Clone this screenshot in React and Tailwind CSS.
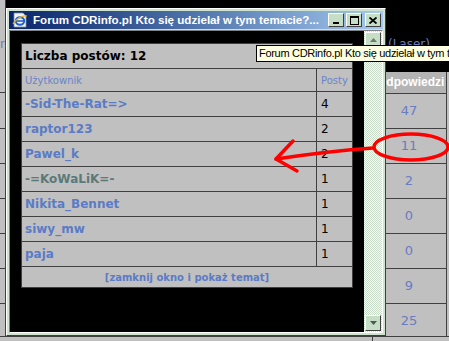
import React from "react";

const users = [
  { name: "-Sid-The-Rat=>", posts: 4 },
  { name: "raptor123", posts: 2 },
  { name: "Pawel_k", posts: 2 },
  { name: "-=KoWaLiK=-", posts: 1, visited: true },
  { name: "Nikita_Bennet", posts: 1 },
  { name: "siwy_mw", posts: 1 },
  { name: "paja", posts: 1 },
];

const replies = ["47", "11", "2", "0", "0", "9", "25"];

function IeIcon() {
  return (
    <svg width="16" height="16" viewBox="0 0 16 16">
      <path d="M2 1h9l3 3v11H2z" fill="#f4f4f4" stroke="#7a8aa0" strokeWidth="0.8" />
      <ellipse cx="8" cy="9" rx="4.2" ry="3.8" fill="none" stroke="#1f5fd0" strokeWidth="2" />
      <path d="M4 9h8" stroke="#1f5fd0" strokeWidth="1.6" />
      <path d="M1 12c3-5 9-9 14-8" fill="none" stroke="#e8b020" strokeWidth="1.2" />
    </svg>
  );
}

function TitleButton({ children }) {
  return (
    <div className="flex h-[14px] w-[16px] items-center justify-center border border-t-white border-l-white border-r-[#404040] border-b-[#404040] bg-[#c6dec6]">
      {children}
    </div>
  );
}

function ScrollButton({ up }) {
  return (
    <div className="flex h-[16px] w-[16px] items-center justify-center border border-t-white border-l-white border-r-[#404040] border-b-[#404040] bg-[#c6dec6]">
      <svg width="7" height="4" viewBox="0 0 7 4">
        {up ? <path d="M0 4h7L3.5 0z" fill="#707870" /> : <path d="M0 0h7L3.5 4z" fill="#505850" />}
      </svg>
    </div>
  );
}

export default function App() {
  return (
    <div className="relative h-[341px] w-[449px] overflow-hidden bg-black font-['DejaVu_Sans',sans-serif]">
      {/* page behind the popup */}
      <div className="flex h-full">
        <div className="flex w-[6px] flex-col border-r border-[#404040] bg-[#c0c0c0]">
          <div className="h-[93px] border-b border-[#404040] pt-[38px] text-[12px] leading-none text-[#6a7cc0]">ra</div>
          <div className="h-[36px] border-b border-[#404040]" />
          <div className="h-[35px] border-b border-[#404040]" />
          <div className="h-[35px] border-b border-[#404040]" />
          <div className="h-[35px] border-b border-[#404040]" />
          <div className="h-[35px] border-b border-[#404040]" />
          <div className="h-[35px] border-b border-[#404040]" />
        </div>
        <div className="w-[380px]" />
        <div className="flex w-[63px] flex-col">
          <div className="h-[72px] pl-[2px] pt-[38px] text-[12px] leading-none text-[#6a7cc0]">(Laser)</div>
          <div className="flex">
            <div className="w-[61px] border-r border-[#404040]">
              <div className="h-[21px] overflow-hidden whitespace-nowrap bg-[#b4b4b4] pt-[4px] font-['Liberation_Sans',sans-serif] text-[12px] font-bold leading-[13px] text-white">
                <span className="ml-[-9px]">Odpowiedzi</span>
              </div>
              {replies.map((r, i) => (
                <div
                  key={i}
                  className="flex h-[35px] items-center justify-center border-t border-[#404040] bg-[#c0c0c0] pr-[14px] text-[13px] text-[#6a7cc0]"
                >
                  {r}
                </div>
              ))}
            </div>
            <div className="w-[2px] bg-[#c0c0c0]" />
          </div>
        </div>
      </div>
      <div className="absolute bottom-0 left-0 h-[5px] w-full border-t border-[#404040] bg-[#c0c0c0]">
        <div className="ml-[372px] h-full w-px bg-[#404040]" />
      </div>

      {/* popup window */}
      <div className="absolute left-[6px] top-[8px] flex h-[328px] w-[380px] flex-col border border-t-white border-l-white border-r-[#404040] border-b-[#404040] bg-[#cfe4cf] p-[2px]">
        <div className="flex h-[18px] items-center bg-gradient-to-r from-[#0a246a] to-[#a6caf0] pl-[3px] pr-[2px]">
          <IeIcon />
          <span className="ml-[5px] flex-1 overflow-hidden whitespace-nowrap font-['Liberation_Sans',sans-serif] text-[11.6px] font-bold text-white">
            Forum CDRinfo.pl Kto się udzielał w tym temacie?...
          </span>
          <div className="flex">
            <TitleButton>
              <div className="mt-[6px] h-[2px] w-[6px] bg-black" />
            </TitleButton>
            <div className="ml-[2px]">
              <TitleButton>
                <div className="h-[9px] w-[9px] border border-t-2 border-black" />
              </TitleButton>
            </div>
            <div className="ml-[3px]">
              <TitleButton>
                <svg width="8" height="7" viewBox="0 0 8 7">
                  <path d="M0.5 0.5l7 6M7.5 0.5l-7 6" stroke="black" strokeWidth="1.8" />
                </svg>
              </TitleButton>
            </div>
          </div>
        </div>
        <div className="mt-[1px] flex flex-1 border border-t-[#808080] border-l-[#808080] border-r-white border-b-white">
          <div className="flex-1 bg-black pl-[11px] pt-[12px]">
            <div className="w-[332px] border border-[#404040] bg-[#c0c0c0]">
              <div className="h-[25px] border-b border-[#404040] pl-[3px] pt-[5px] text-[12px] font-bold leading-[14px] text-black">
                Liczba postów: 12
              </div>
              <div className="flex h-[23px] border-b border-[#404040] text-[10px] text-[#6a84c8]">
                <div className="flex flex-1 items-center border-r border-[#404040] pl-[3px]">Użytkownik</div>
                <div className="flex w-[35px] items-center pl-[4px]">Posty</div>
              </div>
              {users.map((u) => (
                <div key={u.name} className="flex h-[25px] border-b border-[#404040]">
                  <div
                    className={`flex flex-1 items-center border-r border-[#404040] pl-[3px] text-[12px] font-bold ${
                      u.visited ? "text-[#5a7a7a]" : "text-[#5b7bc6]"
                    }`}
                  >
                    {u.name}
                  </div>
                  <div className="flex w-[35px] items-center pl-[4px] text-[12px] text-black">{u.posts}</div>
                </div>
              ))}
              <div className="flex h-[20px] items-center justify-center text-[10px] font-bold text-[#5b7bc6]">
                [zamknij okno i pokaż temat]
              </div>
            </div>
          </div>
          <div className="flex w-[18px] flex-col justify-between bg-[repeating-conic-gradient(#c6dec6_0_25%,#ffffff_0_50%)] bg-[length:2px_2px] p-[1px]">
            <ScrollButton up />
            <ScrollButton />
          </div>
        </div>
      </div>

      {/* tooltip */}
      <div className="absolute left-[256px] top-[45px] h-[17px] w-[210px] border border-black bg-[#ffffe1] pl-[2px] font-['Liberation_Sans',sans-serif] text-[11px] leading-[15px] tracking-[-0.3px] whitespace-nowrap text-black">
        Forum CDRinfo.pl Kto się udzielał w tym temacie?...
      </div>

      {/* red marker drawn on the screenshot */}
      <svg className="pointer-events-none absolute left-0 top-0" width="449" height="341" viewBox="0 0 449 341">
        <ellipse cx="411" cy="147" rx="37" ry="13" fill="none" stroke="#ff0000" strokeWidth="3.5" />
        <path d="M373 148Q330 151 276 159" fill="none" stroke="#ff0000" strokeWidth="3.5" strokeLinecap="round" />
        <path d="M293 141L276 159L297 171" fill="none" stroke="#ff0000" strokeWidth="3.5" strokeLinecap="round" strokeLinejoin="round" />
      </svg>
    </div>
  );
}
